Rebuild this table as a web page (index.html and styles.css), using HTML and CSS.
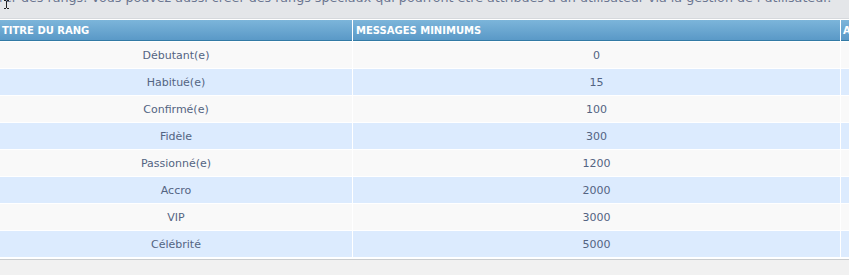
FILE: index.html
```html
<!DOCTYPE html>
<html lang="fr">
<head>
<meta charset="utf-8">
<title>Rangs</title>
<link rel="stylesheet" href="styles.css">
</head>
<body>
<div class="intro"><p>rer des rangs. Vous pouvez aussi créer des rangs spéciaux qui pourront être attribués à un utilisateur via la gestion de l’utilisateur.</p><svg class="cursor" width="7" height="9" viewBox="0 0 7 9"><path d="M1 0.5h2M4 0.5h2M3.5 1v7M1 8.5h2M4 8.5h2" stroke="#222" stroke-width="1" fill="none"/></svg></div>
<div class="table">
  <div class="row head">
    <div class="c1">Titre du rang</div>
    <div class="c2">Messages minimums</div>
    <div class="c3">Action</div>
  </div>
  <div class="row r1"><div class="c1">Débutant(e)</div><div class="c2">0</div><div class="c3"></div></div>
  <div class="row r2"><div class="c1">Habitué(e)</div><div class="c2">15</div><div class="c3"></div></div>
  <div class="row r1"><div class="c1">Confirmé(e)</div><div class="c2">100</div><div class="c3"></div></div>
  <div class="row r2"><div class="c1">Fidèle</div><div class="c2">300</div><div class="c3"></div></div>
  <div class="row r1"><div class="c1">Passionné(e)</div><div class="c2">1200</div><div class="c3"></div></div>
  <div class="row r2"><div class="c1">Accro</div><div class="c2">2000</div><div class="c3"></div></div>
  <div class="row r1"><div class="c1">VIP</div><div class="c2">3000</div><div class="c3"></div></div>
  <div class="row r2"><div class="c1">Célébrité</div><div class="c2">5000</div><div class="c3"></div></div>
</div>
<div class="foot"></div>
</body>
</html>
```
FILE: styles.css
```css
html, body {
  margin: 0;
  padding: 0;
  background: #f1f1f1;
  overflow: hidden;
  width: 849px;
  height: 275px;
}
body {
  font-family: "DejaVu Sans", Verdana, sans-serif;
  font-size: 11px;
  color: #536482;
}
.intro {
  position: relative;
  height: 19px;
  overflow: hidden;
  background: #e4e6e9;
  border-bottom: 1px solid #d6d9dd;
  box-sizing: border-box;
}
.intro p {
  margin: -10px 0 0 -1px;
  font-size: 12.7px;
  line-height: 15px;
  white-space: nowrap;
  color: #6a7590;
}
.cursor {
  position: absolute;
  left: 3px;
  top: 0;
}
.table {
  width: 960px;
  background: #ffffff;
  display: flex;
  flex-direction: column;
  gap: 1px;
  padding-bottom: 2px;
  border-bottom: 1px solid #c9cccf;
}
.row {
  display: grid;
  grid-template-columns: 352px 487px 120px;
  column-gap: 1px;
}
.row > div {
  text-align: center;
  height: 26px;
  line-height: 27px;
  white-space: nowrap;
  overflow: hidden;
}
.head {
  margin-top: 1px;
}
.head > div {
  height: 21px;
  line-height: 22px;
  box-sizing: border-box;
  background: linear-gradient(#7cb5da, #5a99c7);
  border-bottom: 1px solid #327aa5;
  color: #ffffff;
  font-weight: bold;
  font-size: 10px;
  text-transform: uppercase;
  text-align: left;
  padding-left: 2px;
}
.head > .c2 { padding-left: 3px; }
.r1 > div { background: #f9f9f9; }
.r2 > div { background: #dcebfe; }
.foot { height: 20px; }
```
